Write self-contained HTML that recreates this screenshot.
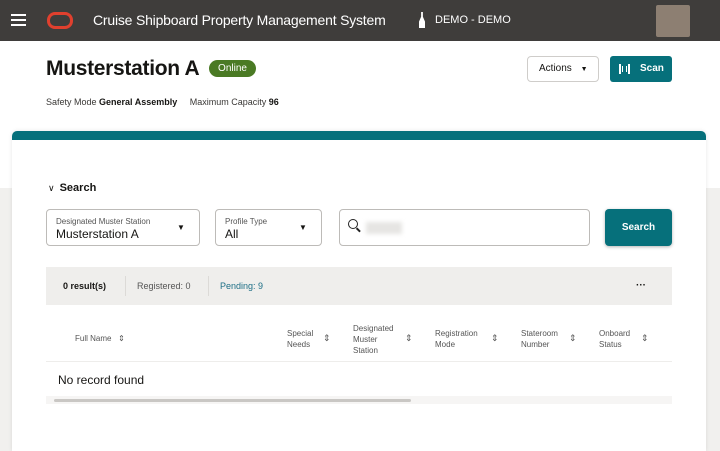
<!DOCTYPE html><html><head><style>
*{box-sizing:border-box;margin:0;padding:0}
body{width:720px;height:441px;overflow:hidden;font-family:"Liberation Sans",sans-serif;background:#f1f0ee;position:relative;color:#161513}
.a{position:absolute}
</style></head><body>
<div class="a" style="left:0;top:0;width:720px;height:188px;background:#fff"></div>
<div class="a" style="left:0;top:0;width:720px;height:41px;background:#3f3d3b"></div>
<div class="a" style="left:11px;top:14px;width:15px;height:2px;background:#fff;box-shadow:0 5px 0 #fff,0 10px 0 #fff"></div>
<div class="a" style="left:47px;top:12px;width:26px;height:17px;border:3.5px solid #e0402e;border-radius:8px"></div>
<div class="a" style="left:93px;top:12px;color:#fff;font-size:14px;letter-spacing:-0.2px">Cruise Shipboard Property Management System</div>
<div class="a" style="left:419px;top:12px;width:6px;height:16px;background:#fff;clip-path:polygon(35% 0,65% 0,65% 30%,100% 60%,100% 100%,0 100%,0 60%,35% 30%)"></div>
<div class="a" style="left:435px;top:14px;color:#fff;font-size:11px">DEMO - DEMO</div>
<div class="a" style="left:656px;top:5px;width:34px;height:32px;background:#8d7f72;border-radius:2px"></div>
<div class="a" style="left:46px;top:57px;font-size:21px;font-weight:bold;letter-spacing:-0.3px">Musterstation A</div>
<div class="a" style="left:209px;top:60px;width:47px;height:17px;background:#4a7a24;border-radius:9px;color:#fff;font-size:10px;text-align:center;line-height:17px">Online</div>
<div class="a" style="left:527px;top:56px;width:72px;height:26px;border:1px solid #cfcdca;border-radius:4px;font-size:10px;line-height:24px;padding-left:11px">Actions <span style="font-size:7px;margin-left:6px">▼</span></div>
<div class="a" style="left:610px;top:56px;width:62px;height:26px;background:#06707b;border-radius:3px;color:#fff;font-size:10px;line-height:26px;padding-left:30px;font-weight:bold">Scan</div>
<div class="a" style="left:619px;top:64px;width:11px;height:10px;border-left:2px solid #fff;border-right:2px solid #fff"></div>
<div class="a" style="left:622px;top:66px;width:5px;height:6px;border-left:1px solid #fff;border-right:1px solid #fff"></div>
<div class="a" style="left:46px;top:97px;font-size:9px;color:#3a3836">Safety Mode <b style="color:#161513">General Assembly</b> &nbsp;&nbsp;&nbsp;&nbsp;Maximum Capacity <b style="color:#161513">96</b></div>
<div class="a" style="left:12px;top:131px;width:694px;height:320px;background:#fff;border-radius:5px 5px 0 0;border-top:9px solid #06707b;box-shadow:0 0 4px rgba(0,0,0,.1)"></div>
<div class="a" style="left:48px;top:182px;font-size:11px;font-weight:bold"><span style="font-weight:normal;font-size:9px;margin-right:5px">∨</span>Search</div>
<div class="a" style="left:46px;top:209px;width:154px;height:37px;border:1px solid #bdbbb8;border-radius:4px"></div>
<div class="a" style="left:56px;top:217px;font-size:8px;color:#555">Designated Muster Station</div>
<div class="a" style="left:56px;top:227px;font-size:12px">Musterstation A</div>
<div class="a" style="left:177px;top:223px;font-size:8px">▼</div>
<div class="a" style="left:215px;top:209px;width:107px;height:37px;border:1px solid #bdbbb8;border-radius:4px"></div>
<div class="a" style="left:225px;top:217px;font-size:8px;color:#555">Profile Type</div>
<div class="a" style="left:225px;top:227px;font-size:12px">All</div>
<div class="a" style="left:299px;top:223px;font-size:8px">▼</div>
<div class="a" style="left:339px;top:209px;width:251px;height:37px;border:1px solid #bdbbb8;border-radius:4px"></div>
<div class="a" style="left:348px;top:219px;width:10px;height:10px;border:1.5px solid #222;border-radius:50%"></div>
<div class="a" style="left:356px;top:229px;width:5px;height:1.5px;background:#222;transform:rotate(45deg)"></div>
<div class="a" style="left:366px;top:222px;width:36px;height:12px;background:#e6e5e3;filter:blur(2px)"></div>
<div class="a" style="left:605px;top:209px;width:67px;height:37px;background:#06707b;border-radius:4px;color:#fff;font-size:10px;font-weight:bold;text-align:center;line-height:37px;box-shadow:0 1px 3px rgba(0,0,0,.3)">Search</div>
<div class="a" style="left:46px;top:267px;width:626px;height:38px;background:#efeeec"></div>
<div class="a" style="left:63px;top:281px;font-size:9px;font-weight:bold">0 result(s)</div>
<div class="a" style="left:125px;top:276px;width:1px;height:20px;background:#dcdad7"></div>
<div class="a" style="left:137px;top:281px;font-size:9px;color:#555">Registered: 0</div>
<div class="a" style="left:208px;top:276px;width:1px;height:20px;background:#dcdad7"></div>
<div class="a" style="left:220px;top:281px;font-size:9px;color:#1e6f86">Pending: 9</div>
<div class="a" style="left:636px;top:280px;font-size:10px;font-weight:bold">···</div>
<div class="a" style="left:75px;top:334px;font-size:8px;color:#555">Full Name &nbsp;&nbsp;⇕</div>
<div class="a" style="left:287px;top:328px;font-size:8px;color:#555;line-height:11px">Special<br>Needs</div>
<div class="a" style="left:353px;top:323px;font-size:8px;color:#555;line-height:11px">Designated<br>Muster<br>Station</div>
<div class="a" style="left:435px;top:328px;font-size:8px;color:#555;line-height:11px">Registration<br>Mode</div>
<div class="a" style="left:521px;top:328px;font-size:8px;color:#555;line-height:11px">Stateroom<br>Number</div>
<div class="a" style="left:599px;top:328px;font-size:8px;color:#555;line-height:11px">Onboard<br>Status</div>
<div class="a" style="left:323px;top:333px;font-size:9px;color:#555">⇕</div>
<div class="a" style="left:405px;top:333px;font-size:9px;color:#555">⇕</div>
<div class="a" style="left:491px;top:333px;font-size:9px;color:#555">⇕</div>
<div class="a" style="left:569px;top:333px;font-size:9px;color:#555">⇕</div>
<div class="a" style="left:641px;top:333px;font-size:9px;color:#555">⇕</div>
<div class="a" style="left:46px;top:361px;width:626px;height:1px;background:#eeedeb"></div>
<div class="a" style="left:58px;top:373px;font-size:12px">No record found</div>
<div class="a" style="left:46px;top:396px;width:626px;height:8px;background:#f6f5f4"></div>
<div class="a" style="left:54px;top:399px;width:357px;height:3px;background:#c9c7c4;border-radius:2px"></div>
</body></html>
